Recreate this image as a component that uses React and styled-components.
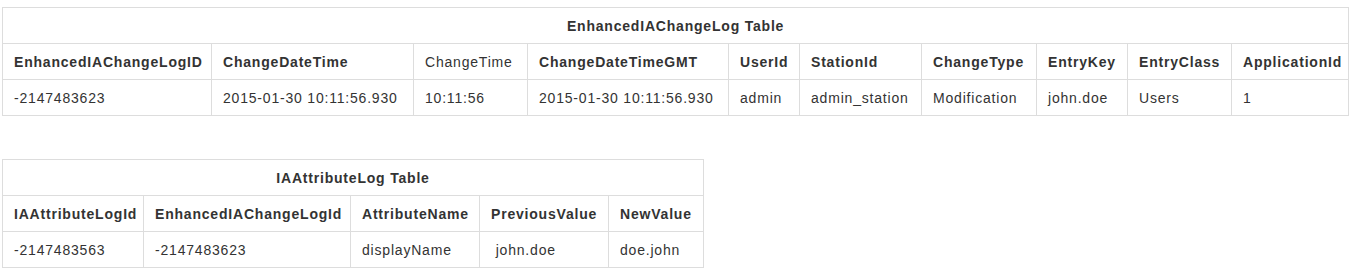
import styled, { createGlobalStyle } from 'styled-components';

const GlobalStyle = createGlobalStyle`
    body {
        margin: 0;
        background: #fff;
        font-family: "Liberation Sans", Arial, Helvetica, sans-serif;
        font-size: 14px;
        line-height: 19px;
        letter-spacing: 0.8px;
        color: #333;
    }
`;

const Page = styled.div`
    display: flex;
    flex-direction: column;
    align-items: flex-start;
    gap: 43px;
    padding: 7px 2px;
`;

const Table = styled.table`
    table-layout: fixed;
    border-collapse: collapse;
    border-spacing: 0;
    border: 1px solid #ddd;
`;

const Caption = styled.th`
    padding: 9px 8px 7px;
    border: 1px solid #ddd;
    text-align: center;
    font-weight: bold;
`;

const Head = styled.th`
    padding: 9px 4px 7px 11px;
    border: 1px solid #ddd;
    text-align: left;
    white-space: nowrap;
    overflow: hidden;
    font-weight: ${(props) => (props.plain ? 'normal' : 'bold')};
`;

const Cell = styled.td`
    padding: 9px 4px 7px 11px;
    border: 1px solid #ddd;
    white-space: nowrap;
    overflow: hidden;
`;

const changeLog = {
    title: 'EnhancedIAChangeLog Table',
    columns: [
        { name: 'EnhancedIAChangeLogID', width: 209 },
        { name: 'ChangeDateTime', width: 202 },
        { name: 'ChangeTime', width: 114, plain: true },
        { name: 'ChangeDateTimeGMT', width: 201 },
        { name: 'UserId', width: 71 },
        { name: 'StationId', width: 122 },
        { name: 'ChangeType', width: 115 },
        { name: 'EntryKey', width: 91 },
        { name: 'EntryClass', width: 104 },
        { name: 'ApplicationId', width: 117 },
    ],
    rows: [
        ['-2147483623', '2015-01-30 10:11:56.930', '10:11:56', '2015-01-30 10:11:56.930', 'admin', 'admin_station', 'Modification', 'john.doe', 'Users', '1'],
    ],
};

const attributeLog = {
    title: 'IAAttributeLog Table',
    columns: [
        { name: 'IAAttributeLogId', width: 141 },
        { name: 'EnhancedIAChangeLogId', width: 207 },
        { name: 'AttributeName', width: 129 },
        { name: 'PreviousValue', width: 129 },
        { name: 'NewValue', width: 95 },
    ],
    rows: [
        ['-2147483563', '-2147483623', 'displayName', '\u00a0john.doe', 'doe.john'],
    ],
};

const LogTable = ({ data }) => {
    // outer border adds half a pixel on each side in the collapsed model
    const total = data.columns.reduce((sum, col) => sum + col.width, 0) + 1;

    return (
        <Table style={{ width: total }}>
            <colgroup>
                {data.columns.map((col) => (
                    <col key={col.name} style={{ width: col.width }} />
                ))}
            </colgroup>
            <thead>
                <tr>
                    <Caption colSpan={data.columns.length}>{data.title}</Caption>
                </tr>
                <tr>
                    {data.columns.map((col) => (
                        <Head key={col.name} plain={col.plain ? 1 : 0}>{col.name}</Head>
                    ))}
                </tr>
            </thead>
            <tbody>
                {data.rows.map((row, i) => (
                    <tr key={i}>
                        {row.map((value, j) => (
                            <Cell key={j}>{value}</Cell>
                        ))}
                    </tr>
                ))}
            </tbody>
        </Table>
    );
};

const App = () => (
    <>
        <GlobalStyle />
        <Page>
            <LogTable data={changeLog} />
            <LogTable data={attributeLog} />
        </Page>
    </>
);

export default App;
